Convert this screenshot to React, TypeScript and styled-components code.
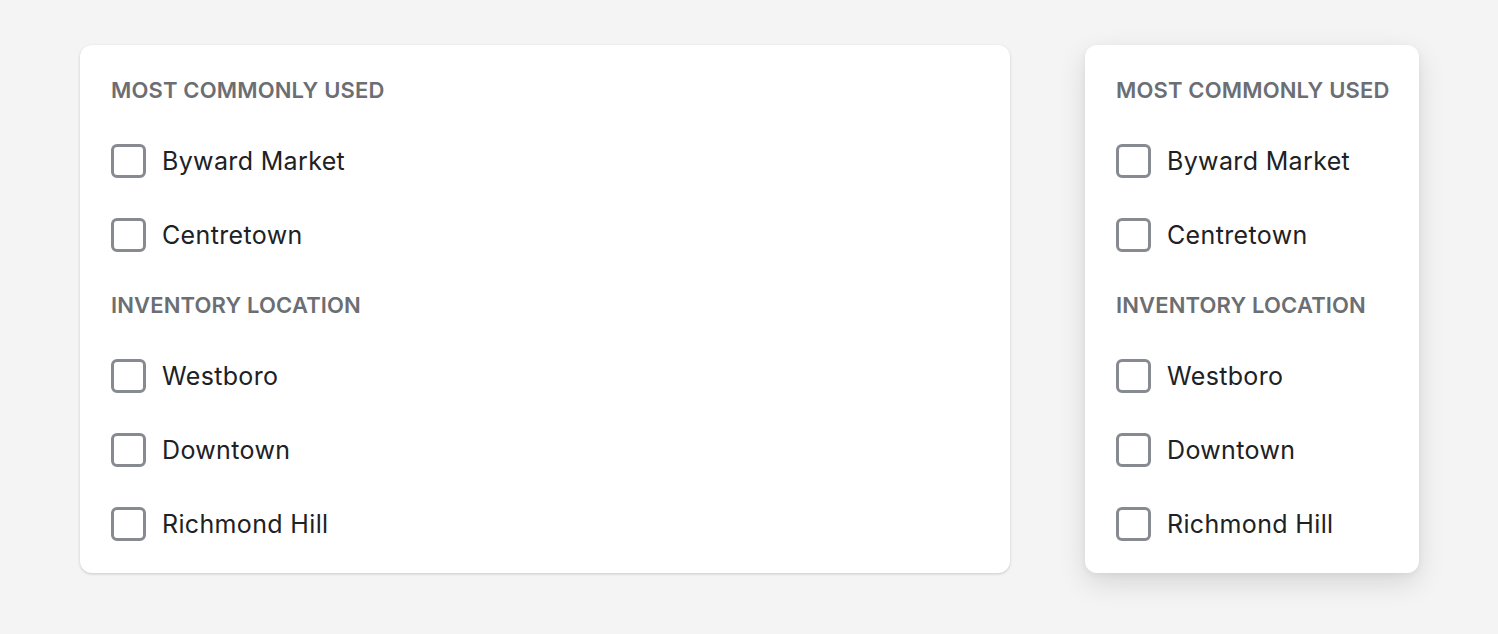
import styled, { createGlobalStyle } from 'styled-components';

const GlobalStyle = createGlobalStyle`
  html, body {
    margin: 0;
    padding: 0;
    background-color: #f4f4f4;
    font-family: Inter, "Noto Sans", "Liberation Sans", sans-serif;
    -webkit-font-smoothing: antialiased;
  }
`;

interface Section {
  title: string;
  items: string[];
}

const sections: Section[] = [
  { title: 'Most commonly used', items: ['Byward Market', 'Centretown'] },
  { title: 'Inventory location', items: ['Westboro', 'Downtown', 'Richmond Hill'] },
];

function LocationList() {
  return (
    <>
      {sections.map((section) => (
        <S.Group key={section.title}>
          <S.Heading>{section.title}</S.Heading>
          {section.items.map((item) => (
            <S.Option key={item}>
              <S.Box type="checkbox" />
              <span>{item}</span>
            </S.Option>
          ))}
        </S.Group>
      ))}
    </>
  );
}

function App() {
  return (
    <>
      <GlobalStyle />
      <S.Page>
        <S.Card $elevated={false}>
          <LocationList />
        </S.Card>
        <S.Card $elevated $width={334}>
          <LocationList />
        </S.Card>
      </S.Page>
    </>
  );
}

export default App;

const S = {
  Page: styled.main`
    display: flex;
    align-items: flex-start;
    gap: 75px;
    padding: 45px 79px 60px 80px;
    min-height: 634px;
    box-sizing: border-box;
  `,
  Card: styled.section<{ $elevated: boolean; $width?: number }>`
    display: flex;
    flex-direction: column;
    gap: 40px;
    box-sizing: border-box;
    padding: 32px 31px 32px;
    background-color: #ffffff;
    border-radius: 12px;
    ${({ $width }) => ($width ? `width: ${$width}px; flex: none;` : 'flex: 1;')}
    box-shadow: ${({ $elevated }) =>
      $elevated
        ? '0 10px 28px rgba(0, 0, 0, 0.12), 0 2px 6px rgba(0, 0, 0, 0.05)'
        : '0 1px 3px rgba(0, 0, 0, 0.18)'};
  `,
  Group: styled.div`
    display: contents;
  `,
  Heading: styled.h3`
    margin: 0;
    height: 27px;
    line-height: 26px;
    font-size: 22px;
    font-weight: 600;
    letter-spacing: 0.15px;
    text-transform: uppercase;
    color: #6b6e72;
    white-space: nowrap;
  `,
  Option: styled.label`
    display: flex;
    align-items: center;
    gap: 16px;
    height: 34px;
    font-size: 25px;
    letter-spacing: 0.35px;
    color: #202124;
    white-space: nowrap;
    cursor: pointer;
  `,
  Box: styled.input`
    appearance: none;
    margin: 0;
    flex: none;
    width: 35px;
    height: 34px;
    box-sizing: border-box;
    border: 3px solid #878a90;
    border-radius: 6px;
    background: #ffffff;
    cursor: pointer;
  `,
};
